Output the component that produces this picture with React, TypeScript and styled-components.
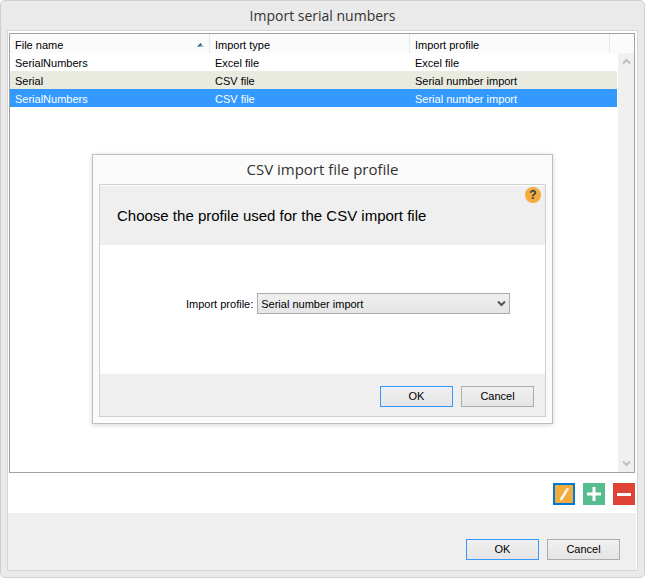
import React from "react";
import styled, { createGlobalStyle } from "styled-components";

const GlobalStyle = createGlobalStyle`
  *, *::before, *::after { box-sizing: border-box; }
  body {
    margin: 0;
    background: #fff;
    color: #000;
    font: 11px/18px "Liberation Sans", Arial, sans-serif;
  }
  button, select { font: inherit; color: inherit; }
`;

const Window = styled.main`
  position: relative;
  display: flex;
  flex-direction: column;
  min-height: 100vh;
  padding: 0 6px 6px;
  background: #eaeaea;
  border: 1px solid #d0d0d0;
  border-radius: 5px;
`;

const Title = styled.h1`
  margin: 0;
  height: 29px;
  font: 400 14px/29px "Open Sans", "Segoe UI", sans-serif;
  text-align: center;
  color: #333;
`;

const Content = styled.div`
  flex: 1;
  display: flex;
  flex-direction: column;
  background: #fff;
  border: 1px solid #d6d6d6;
`;

const ListBox = styled.div`
  flex: 1;
  display: flex;
  margin: 2px 2px 0 1px;
  border: 1px solid #a0a0a0;
`;

const ListArea = styled.div`
  flex: 1;
`;

const FileTable = styled.table`
  width: 100%;
  table-layout: fixed;
  border-collapse: separate;
  border-spacing: 0;
`;

const HeadCell = styled.th<{ $width?: number }>`
  width: ${(p) => (p.$width ? `${p.$width}px` : "auto")};
  height: 19px;
  padding: 3px 5px 0;
  background: #fbfbfb;
  border-right: ${(p) => (p.$width ? "1px solid #e3e8f0" : "0")};
  font-weight: 400;
  line-height: 16px;
  text-align: left;
`;

const HeadLabel = styled.span`
  display: flex;
  align-items: center;
  justify-content: space-between;
`;

const Row = styled.tr<{ $tone: "plain" | "alt" | "selected" }>`
  background: ${(p) => ({ plain: "#fff", alt: "#e9ebe0", selected: "#3399ff" })[p.$tone]};
  color: ${(p) => (p.$tone === "selected" ? "#fff" : "#000")};
`;

const Cell = styled.td`
  height: 18px;
  padding: 2px 5px 0;
  line-height: 16px;
  white-space: nowrap;
`;

const ScrollColumn = styled.div`
  display: flex;
  flex-direction: column;
  width: 17px;
  padding-top: 19px;
  background: #fbfbfb;
`;

const ScrollTrack = styled.div`
  flex: 1;
  display: flex;
  flex-direction: column;
  justify-content: space-between;
  background: #f0f0f0;
  border-left: 1px solid #fff;
`;

const ScrollButton = styled.button`
  display: grid;
  place-items: center;
  height: 17px;
  padding: 0;
  border: 0;
  background: none;
`;

const Tools = styled.div`
  display: flex;
  justify-content: flex-end;
  gap: 8px;
  padding: 10px 2px 8px;
`;

const ToolButton = styled.button<{ $fill: string; $focused?: boolean }>`
  width: 22px;
  height: 22px;
  padding: 0;
  border: ${(p) => (p.$focused ? "2px solid #0078d7" : "0")};
  background: ${(p) => p.$fill};
  display: grid;
  place-items: center;
`;

const Footer = styled.footer<{ $variant: "window" | "dialog" }>`
  display: flex;
  justify-content: flex-end;
  gap: 8px;
  margin-right: ${(p) => (p.$variant === "window" ? "1px" : "0")};
  padding: ${(p) => (p.$variant === "window" ? "26px 16px 10px" : "12px 11px 9px")};
  background: #efefef;
`;

const PushButton = styled.button<{ $primary?: boolean }>`
  width: 73px;
  height: 21px;
  padding: 0;
  border: 1px solid ${(p) => (p.$primary ? "#3399ff" : "#acacac")};
  background: linear-gradient(#f0f0f0, #e5e5e5);
  line-height: 19px;
  text-align: center;
`;

const Overlay = styled.div`
  position: absolute;
  inset: -1px;
  display: grid;
  place-items: center;
`;

const Dialog = styled.section`
  width: 461px;
  padding: 0 6px 6px;
  background: #fbfbfb;
  border: 1px solid #bdbdbd;
  box-shadow: 0 1px 5px rgba(0, 0, 0, 0.16);
`;

const DialogTitle = styled(Title).attrs({ as: "h2" })`
  font-size: 15px;
`;

const DialogContent = styled.div`
  border: 1px solid #d0d0d0;
  background: #fff;
`;

const Banner = styled.div`
  display: flex;
  justify-content: space-between;
  align-items: flex-start;
  height: 59px;
  margin-top: 1px;
  padding: 1px 4px 0 17px;
  background: #efefef;
`;

const BannerText = styled.p`
  margin: 0;
  font-size: 15px;
  line-height: 58px;
`;

const HelpButton = styled.button`
  width: 16px;
  height: 16px;
  padding: 0;
  border: 0;
  border-radius: 50%;
  background: #f2ab3d;
  color: #333f48;
  font-size: 12px;
  font-weight: 700;
  line-height: 16px;
`;

const Field = styled.div`
  display: flex;
  align-items: center;
  gap: 4px;
  padding: 48px 35px 60px 86px;
`;

const FieldLabel = styled.label`
  flex: 0 0 67px;
  white-space: nowrap;
`;

const SelectWrap = styled.div`
  flex: 1;
  display: grid;
  align-items: center;
  justify-items: end;
`;

const Select = styled.select`
  grid-area: 1 / 1;
  appearance: none;
  width: 100%;
  height: 21px;
  padding: 0 20px 0 3px;
  border: 1px solid #acacac;
  border-radius: 0;
  background: linear-gradient(#f0f0f0, #e5e5e5);
`;

const SelectArrow = styled.svg`
  grid-area: 1 / 1;
  margin-right: 4px;
  pointer-events: none;
`;

const files = [
  { name: "SerialNumbers", type: "Excel file", profile: "Excel file", tone: "plain" },
  { name: "Serial", type: "CSV file", profile: "Serial number import", tone: "alt" },
  { name: "SerialNumbers", type: "CSV file", profile: "Serial number import", tone: "selected" },
] as const;

const ScrollArrow = ({ down }: { down?: boolean }) => (
  <svg width="9" height="7" viewBox="0 0 9 7" aria-hidden="true">
    <path d={down ? "M1 1.5 4.5 5 8 1.5" : "M1 5.5 4.5 2 8 5.5"} fill="none" stroke="#bfbfbf" strokeWidth="2" />
  </svg>
);

const FileList = () => (
  <ListBox>
    <ListArea>
      <FileTable>
        <thead>
          <tr>
            <HeadCell $width={200} scope="col" aria-sort="ascending">
              <HeadLabel>
                File name
                <svg width="7" height="4" viewBox="0 0 7 4" aria-hidden="true">
                  <path d="M0 4 3.5 0 7 4Z" fill="#8cc3da" />
                  <path d="M0 4 3.5 0 5 2 3 3Z" fill="#3c6178" />
                </svg>
              </HeadLabel>
            </HeadCell>
            <HeadCell $width={200} scope="col">Import type</HeadCell>
            <HeadCell $width={200} scope="col">Import profile</HeadCell>
            <HeadCell as="td" />
          </tr>
        </thead>
        <tbody>
          {files.map((file, i) => (
            <Row key={i} $tone={file.tone} aria-selected={file.tone === "selected"}>
              <Cell>{file.name}</Cell>
              <Cell>{file.type}</Cell>
              <Cell>{file.profile}</Cell>
              <Cell />
            </Row>
          ))}
        </tbody>
      </FileTable>
    </ListArea>
    <ScrollColumn>
      <ScrollTrack>
        <ScrollButton type="button" aria-label="Scroll up"><ScrollArrow /></ScrollButton>
        <ScrollButton type="button" aria-label="Scroll down"><ScrollArrow down /></ScrollButton>
      </ScrollTrack>
    </ScrollColumn>
  </ListBox>
);

const ProfileDialog = () => (
  <Overlay>
    <Dialog role="dialog" aria-labelledby="profile-title">
      <DialogTitle id="profile-title">CSV import file profile</DialogTitle>
      <DialogContent>
        <Banner>
          <BannerText>Choose the profile used for the CSV import file</BannerText>
          <HelpButton type="button" aria-label="Help">?</HelpButton>
        </Banner>
        <Field>
          <FieldLabel htmlFor="profile">Import profile:</FieldLabel>
          <SelectWrap>
            <Select id="profile" defaultValue="serial">
              <option value="serial">Serial number import</option>
            </Select>
            <SelectArrow width="9" height="7" viewBox="0 0 9 7" aria-hidden="true">
              <path d="M1 1.5 4.5 5 8 1.5" fill="none" stroke="#555" strokeWidth="2" />
            </SelectArrow>
          </SelectWrap>
        </Field>
        <Footer $variant="dialog">
          <PushButton type="button" $primary>OK</PushButton>
          <PushButton type="button">Cancel</PushButton>
        </Footer>
      </DialogContent>
    </Dialog>
  </Overlay>
);

export default function App() {
  return (
    <>
      <GlobalStyle />
      <Window>
        <Title>Import serial numbers</Title>
        <Content>
          <FileList />
          <Tools>
            <ToolButton type="button" aria-label="Edit" $fill="#f2ab3d" $focused>
              <svg width="18" height="18" viewBox="0 0 18 18" aria-hidden="true">
                <path d="M12 2.5 14 4 7.500 14.500 5 16 5.500 13Z" fill="#fff" />
                <path d="M11 4.200 13 5.600" stroke="#f2ab3d" strokeWidth="0.5" />
              </svg>
            </ToolButton>
            <ToolButton type="button" aria-label="Add" $fill="#55bd8d">
              <svg width="22" height="22" viewBox="0 0 22 22" aria-hidden="true">
                <path d="M11 4V18M4 11H18" stroke="#fff" strokeWidth="3" />
              </svg>
            </ToolButton>
            <ToolButton type="button" aria-label="Remove" $fill="#e04236">
              <svg width="22" height="22" viewBox="0 0 22 22" aria-hidden="true">
                <path d="M4 11.500H18" stroke="#fff" strokeWidth="3" />
              </svg>
            </ToolButton>
          </Tools>
          <Footer $variant="window">
            <PushButton type="button" $primary>OK</PushButton>
            <PushButton type="button">Cancel</PushButton>
          </Footer>
        </Content>
        <ProfileDialog />
      </Window>
    </>
  );
}
